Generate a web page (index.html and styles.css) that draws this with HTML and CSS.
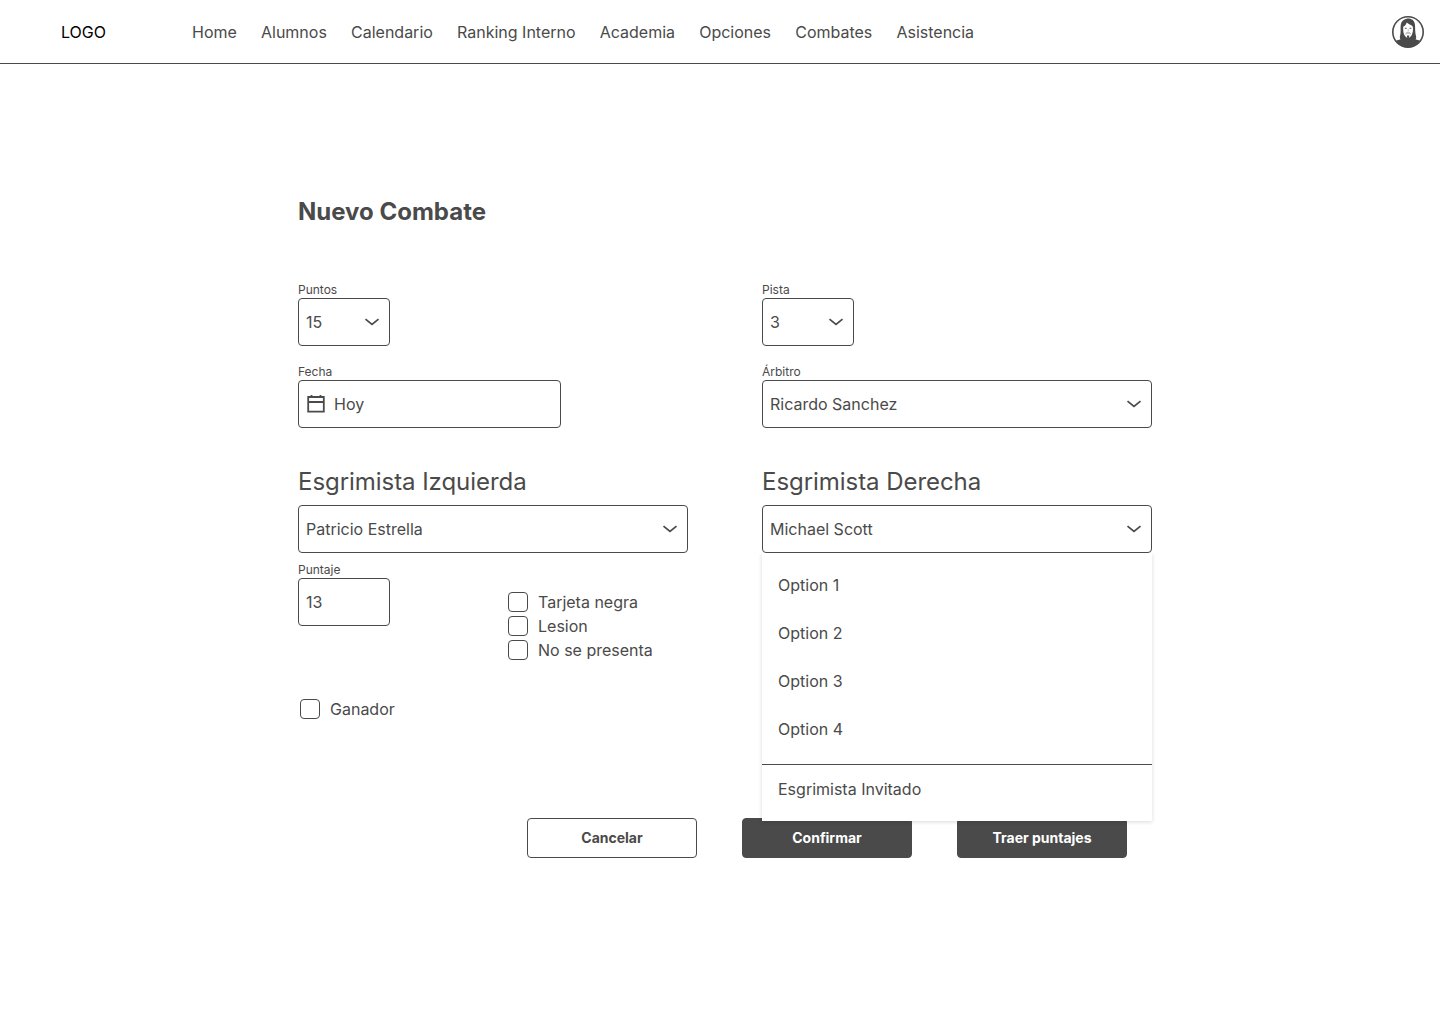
FILE: index.html
```html
<!DOCTYPE html>
<html lang="es">
<head>
<meta charset="utf-8">
<title>Nuevo Combate</title>
<link rel="stylesheet" href="styles.css">
</head>
<body>
<svg class="sprite" aria-hidden="true">
  <symbol id="chevron" viewBox="0 0 24 24"><path d="M5.5 9.1 L12 14.4 L18.5 9.1" fill="none" stroke="currentColor" stroke-width="1.7"/></symbol>
</svg>
<header class="topbar">
  <a class="logo">LOGO</a>
  <nav class="nav">
    <a>Home</a><a>Alumnos</a><a>Calendario</a><a>Ranking Interno</a><a>Academia</a><a>Opciones</a><a>Combates</a><a>Asistencia</a>
  </nav>
  <svg class="avatar" viewBox="0 0 32 32" aria-label="Perfil">
    <defs><clipPath id="face"><circle cx="16" cy="16" r="15.2"/></clipPath></defs>
    <circle cx="16" cy="16" r="15.2" fill="#fff" stroke="currentColor" stroke-width="1.6"/>
    <g clip-path="url(#face)">
      <path d="M2 32 V26 C4 24 8 24 11.5 22 H20.5 C24 24 28 24 30 26 V32Z" fill="currentColor"/>
      <path d="M14.6 2.8 C18.6 1.9 22.6 4 23 9 C23.3 13 22.9 16.5 24.1 20.5 C24.6 22.5 23.6 24 22 24.4 H10 C8 23.8 7.5 22 8 20 C9.2 16.5 8.2 12.5 8.7 9 C9.2 5.3 11.5 3.4 14.6 2.8Z" fill="currentColor"/>
      <path d="M11.3 10.5 C13.2 9.8 14.2 8.2 14.7 6.4 C16.3 8.2 19 8.2 20.9 10.8 C21.2 14.5 20.9 17.2 19.5 19.4 C18.4 21 17.2 21.8 16.1 21.8 C15 21.8 13.6 21 12.6 19.4 C11.3 17.2 11 14.5 11.3 10.5Z" fill="#fff"/>
      <path d="M13.5 17.9 C14.5 16.8 15.3 16.9 16.1 17 C16.9 16.9 17.7 16.8 18.7 17.9" fill="none" stroke="currentColor" stroke-width=".7"/>
      <path d="M15 19.6 H17.2 L17.2 21.5 L16.1 22.2 L15 21.5Z" fill="currentColor"/>
      <path d="M12.8 12.3 H14.7 M17.5 12.3 H19.4" stroke="currentColor" stroke-width=".9"/>
      <path d="M16.3 13 V15.2 H15.6" fill="none" stroke="currentColor" stroke-width=".3"/>
    </g>
  </svg>
</header>

<main class="page">
  <h1 class="title">Nuevo Combate</h1>
  <div class="columns">
    <section class="column">
      <div class="field"><span class="label">Puntos</span>
        <div class="box small"><span>15</span><svg class="icon"><use href="#chevron"/></svg></div></div>
      <div class="field"><span class="label">Fecha</span>
        <div class="box date">
          <svg class="icon" viewBox="0 0 24 24"><path d="M4.2 5 H19.8 V19.6 H4.2Z M4.2 10 H19.8 M7.5 3 V6 M16.5 3 V6" fill="none" stroke="currentColor" stroke-width="1.8"/></svg>
          <span>Hoy</span></div></div>
      <h2 class="subtitle">Esgrimista Izquierda</h2>
      <div class="box"><span>Patricio Estrella</span><svg class="icon"><use href="#chevron"/></svg></div>
      <div class="score">
        <div class="score-field"><span class="label">Puntaje</span><div class="box small"><span>13</span></div></div>
        <div class="checks">
          <div class="check"><span class="tick"></span>Tarjeta negra</div>
          <div class="check"><span class="tick"></span>Lesion</div>
          <div class="check"><span class="tick"></span>No se presenta</div>
        </div>
      </div>
      <div class="check winner"><span class="tick"></span>Ganador</div>
    </section>
    <section class="column">
      <div class="field"><span class="label">Pista</span>
        <div class="box small"><span>3</span><svg class="icon"><use href="#chevron"/></svg></div></div>
      <div class="field"><span class="label">Árbitro</span>
        <div class="box"><span>Ricardo Sanchez</span><svg class="icon"><use href="#chevron"/></svg></div></div>
      <h2 class="subtitle">Esgrimista Derecha</h2>
      <div class="select">
        <div class="box"><span>Michael Scott</span><svg class="icon"><use href="#chevron"/></svg></div>
        <div class="menu">
          <div class="option">Option 1</div>
          <div class="option">Option 2</div>
          <div class="option">Option 3</div>
          <div class="option">Option 4</div>
          <div class="guest"><div class="option">Esgrimista Invitado</div></div>
        </div>
      </div>
    </section>
  </div>
  <div class="actions">
    <button class="button">Cancelar</button>
    <button class="button primary">Confirmar</button>
    <button class="button primary">Traer puntajes</button>
  </div>
</main>
</body>
</html>
```
FILE: styles.css
```css
* { box-sizing: border-box; }
body {
  margin: 0;
  background: #fff;
  color: #4a4a4a;
  font: 16px/24px Inter, sans-serif;
}
.sprite { display: none; }
.topbar {
  display: flex;
  align-items: center;
  height: 64px;
  padding: 0 16px 0 61px;
  border-bottom: 1px solid #4a4a4a;
}
.logo { width: 131px; color: #000; }
.nav { display: flex; gap: 24.15px; flex: 1; white-space: nowrap; }
.avatar { width: 32px; height: 32px; }
.page { width: 854px; margin-left: 298px; padding-top: 132px; }
.title { margin: 0 0 54px; font-size: 24px; line-height: 32px; font-weight: 700; }
.columns { display: grid; grid-template-columns: 390px 390px; column-gap: 74px; }
.column { display: flex; flex-direction: column; }
.field { margin-bottom: 18px; }
.label { display: block; font-size: 12px; line-height: 16px; }
.box {
  display: flex;
  align-items: center;
  justify-content: space-between;
  height: 48px;
  padding: 0 5px 0 7px;
  border: 1px solid #4a4a4a;
  border-radius: 4px;
}
.small { width: 92px; }
.date { width: 263px; justify-content: flex-start; gap: 6px; padding-left: 5px; }
.icon { width: 24px; height: 24px; flex: none; }
.subtitle {
  margin: 20px 0 7px;
  font-size: 24px;
  line-height: 32px;
  font-weight: 400;
  letter-spacing: -.05px;
}
.score { display: flex; margin-top: 9px; }
.score-field { width: 210px; }
.checks { padding-top: 28px; }
.check { display: flex; align-items: center; gap: 10px; height: 24px; }
.tick { width: 20px; height: 20px; border: 1px solid #4a4a4a; border-radius: 4px; }
.winner { margin: 35px 0 0 2px; }
.select { position: relative; }
.menu {
  position: absolute;
  top: 48px;
  left: 0;
  width: 100%;
  padding: 8px 0;
  background: #fff;
  box-shadow: 0 1px 4px rgba(0, 0, 0, .15);
  clip-path: inset(0 -8px -8px -8px);
}
.option { height: 48px; padding: 12px 16px; }
.guest { margin-top: 11px; border-top: 1px solid #4a4a4a; }
.actions { display: flex; gap: 45px; margin: 97px 0 0 229px; }
.button {
  width: 170px;
  height: 40px;
  padding: 0;
  border: 1px solid #4a4a4a;
  border-radius: 4px;
  background: #fff;
  color: #4a4a4a;
  font: 700 14px/20px Inter, sans-serif;
}
.primary { background: #4a4a4a; color: #fff; }
```
